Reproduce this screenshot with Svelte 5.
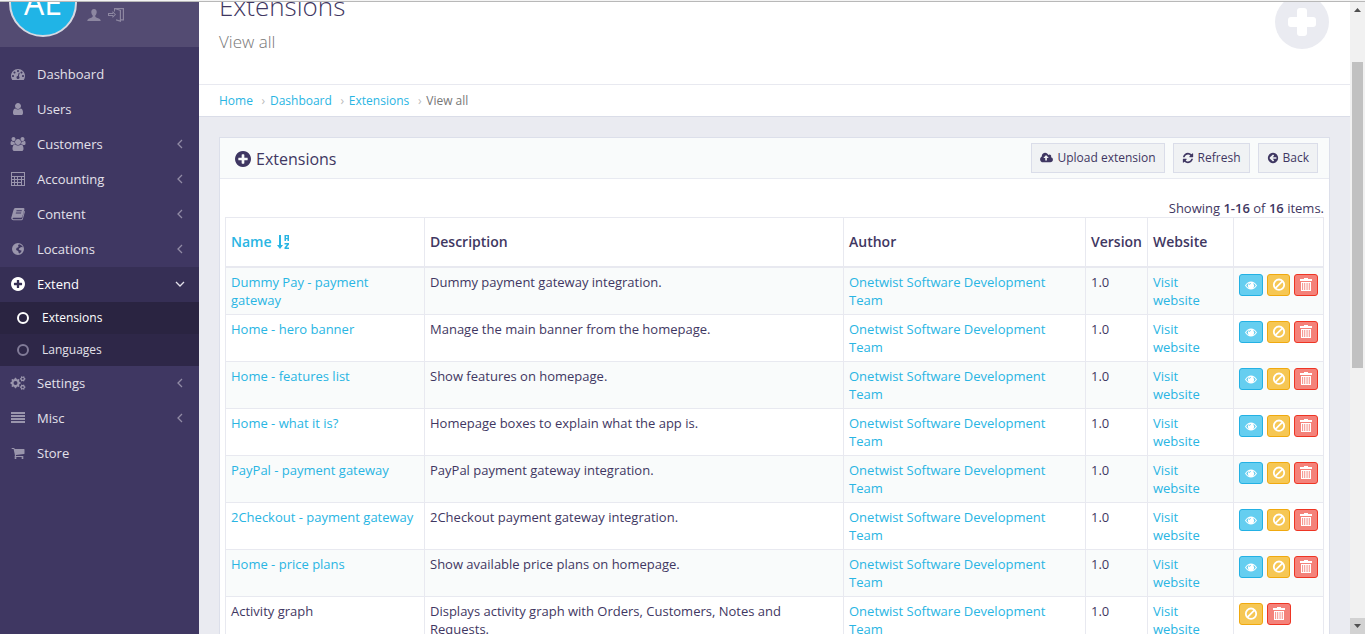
<script>
  const menu = [
    { label: 'Dashboard', icon: 'gauge' },
    { label: 'Users', icon: 'user' },
    { label: 'Customers', icon: 'users', more: true },
    { label: 'Accounting', icon: 'calc', more: true },
    { label: 'Content', icon: 'book', more: true },
    { label: 'Locations', icon: 'globe', more: true },
    { label: 'Extend', icon: 'plus', more: true, open: true, children: ['Extensions', 'Languages'] },
    { label: 'Settings', icon: 'cogs', more: true },
    { label: 'Misc', icon: 'lines', more: true },
    { label: 'Store', icon: 'cart' }
  ];
  const rows = [
    ['Dummy Pay - payment gateway', 'Dummy payment gateway integration.'],
    ['Home - hero banner', 'Manage the main banner from the homepage.'],
    ['Home - features list', 'Show features on homepage.'],
    ['Home - what it is?', 'Homepage boxes to explain what the app is.'],
    ['PayPal - payment gateway', 'PayPal payment gateway integration.'],
    ['2Checkout - payment gateway', '2Checkout payment gateway integration.'],
    ['Home - price plans', 'Show available price plans on homepage.'],
    ['Activity graph', 'Displays activity graph with Orders, Customers, Notes and Requests.', true]
  ];
  const paths = {
    gauge: ['0 0 1792 1792', 'M384 1152q0-53-37.5-90.5t-90.5-37.5-90.5 37.5-37.5 90.5 37.5 90.5 90.5 37.5 90.5-37.5 37.5-90.5zm192-448q0-53-37.5-90.5t-90.5-37.5-90.5 37.5-37.5 90.5 37.5 90.5 90.5 37.5 90.5-37.5 37.5-90.5zm428 481l101-382q6-26-7.5-48.5t-38.5-29.5-48 6.5-30 39.5l-101 382q-60 5-107 43.5t-63 98.5q-20 77 20 146t117 89 146-20 89-117q16-60-6-117t-72-91zm660-33q0-53-37.5-90.5t-90.5-37.5-90.5 37.5-37.5 90.5 37.5 90.5 90.5 37.5 90.5-37.5 37.5-90.5zm-640-640q0-53-37.5-90.5t-90.5-37.5-90.5 37.5-37.5 90.5 37.5 90.5 90.5 37.5 90.5-37.5 37.5-90.5zm448 192q0-53-37.5-90.5t-90.5-37.5-90.5 37.5-37.5 90.5 37.5 90.5 90.5 37.5 90.5-37.5 37.5-90.5zm320 448q0 261-141 483-19 29-54 29h-1402q-35 0-54-29-141-221-141-483 0-182 71-348t191-286 286-191 348-71 348 71 286 191 191 286 71 348z'],
    user: ['0 0 1792 1792', 'M1536 1399q0 109-62.5 187t-150.5 78h-854q-88 0-150.5-78t-62.5-187q0-85 8.5-160.5t31.5-152 58.5-131 94-89 134.5-34.5q131 128 313 128t313-128q76 0 134.5 34.5t94 89 58.5 131 31.5 152 8.5 160.5zm-256-887q0 159-112.5 271.5t-271.5 112.5-271.5-112.5-112.5-271.5 112.5-271.5 271.5-112.5 271.5 112.5 112.5 271.5z'],
    users: ['64 0 1920 1792', 'M657 896q-162 5-265 128h-134q-82 0-138-40.5t-56-118.5q0-353 124-353 6 0 43.5 21t97.5 42.5 119 21.5q67 0 133-23-5 37-5 66 0 159 93 293zm1071 637q0 120-73 189.5t-194 69.5h-874q-121 0-194-69.5t-73-189.5q0-53 3.5-103.5t14-109 26.5-108.5 43-97.5 62-81 85.5-53.5 111.5-20q10 0 43 21.5t73 48 107 48 135 21.5 135-21.5 107-48 73-48 43-21.5q61 0 111.5 20t85.5 53.5 62 81 43 97.5 26.5 108.5 14 109 3.5 103.5zm-1024-1277q0 106-75 181t-181 75-181-75-75-181 75-181 181-75 181 75 75 181zm704 384q0 159-112.5 271.5t-271.5 112.5-271.5-112.5-112.5-271.5 112.5-271.5 271.5-112.5 271.5 112.5 112.5 271.5zm576 225q0 78-56 118.5t-138 40.5h-134q-103-123-265-128 93-134 93-293 0-29-5-66 66 23 133 23 59 0 119-21.5t97.5-42.5 43.5-21q124 0 124 353zm-128-609q0 106-75 181t-181 75-181-75-75-181 75-181 181-75 181 75 75 181z'],
    calc: ['0 0 14 14', 'M0 0h14v14h-14zM1 1v3h12v-3zM1 5v2h2v-2zM4 5v2h2v-2zM7 5v2h3v-2zM11 5v2h2v-2zM1 8v2h2v-2zM4 8v2h2v-2zM7 8v2h3v-2zM11 8v5h2v-5zM1 11v2h2v-2zM4 11v2h2v-2zM7 11v2h3v-2z'],
    book: ['0 0 14 14', 'M4.4 1h8q1.300.1 1 1.400l-2.100 7.400q-.3 1-1.300 1H2.400q-.8 0-.8.700t.9.700h7.800q.7 0 .9-.7l2-7.700q.9.400.6 1.500l-1.900 6.700q-.4 1.200-1.600 1.200H2.300Q.7 13.200.3 11.800q-.2-.8.1-1.500l2-7q.5-2.200 2-2.300zM5.600 3.300l-.3 1h5.300l.3-1zM5 5.500l-.3 1H10l.3-1z'],
    globe: ['0 0 14 14', 'M7 1a6 6 0 1 0 0 12A6 6 0 1 0 7 1zM8 2.300l2 .6 1.900 2.100-.7.3-1.200-.4-.8.900-1.200.6-.2 1.200 1.200.6 1.500.4-.3 1.500-1.800 1.300-.7-.3-.3-1.500L6.800 8.800l-1-.4-.8-1.100.8-1.500 1.500-.6.200-1.300-.6-.5z'],
    plus: ['128 128 1536 1536', 'M1344 960v-128q0-26-19-45t-45-19h-256v-256q0-26-19-45t-45-19h-128q-26 0-45 19t-19 45v256h-256q-26 0-45 19t-19 45v128q0 26 19 45t45 19h256v256q0 26 19 45t45 19h128q26 0 45-19t19-45v-256h256q26 0 45-19t19-45zm320-64q0 209-103 385.500t-279.500 279.500-385.500 103-385.500-103-279.500-279.500-103-385.500 103-385.500 279.500-279.500 385.500-103 385.500 103 279.500 279.500 103 385.500z'],
    lines: ['0 0 14 14', 'M0 1h14v2H0zM0 4h14v2H0zM0 7h14v2H0zM0 10h14v2H0z'],
    cart: ['0 0 1792 1792', 'M704 1536q0 52-38 90t-90 38-90-38-38-90 38-90 90-38 90 38 38 90zm896 0q0 52-38 90t-90 38-90-38-38-90 38-90 90-38 90 38 38 90zm128-1088v512q0 24-16.500 42.500t-40.500 21.500l-1044 122q13 60 13 70 0 16-24 64h920q26 0 45 19t19 45-19 45-45 19h-1024q-26 0-45-19t-19-45q0-11 8-31.500t16-36 21.500-40 15.500-29.500l-177-823h-204q-26 0-45-19t-19-45 19-45 45-19h256q16 0 28.500 6.500t19.500 15.500 13 24.500 8 26 5.500 29.500 4.500 26h1201q26 0 45 19t19 45z'],
    cloud: ['-64 0 1920 1792', 'M1216 864q0-14-9-23l-352-352q-9-9-23-9t-23 9l-351 351q-10 12-10 24 0 14 9 23t23 9h224v352q0 13 9.500 22.500t22.500 9.500h192q13 0 22.500-9.500t9.500-22.500v-352h224q13 0 22.500-9.500t9.500-22.500zm640 288q0 159-112.500 271.500t-271.500 112.500h-1088q-185 0-316.500-131.500t-131.500-316.500q0-130 70-240t188-165q-2-30-2-43 0-212 150-362t362-150q156 0 285.500 87t188.500 231q71-62 166-62 106 0 181 75t75 181q0 76-41 138 130 31 213.500 135.500t83.500 238.500z'],
    refresh: ['0 0 1792 1792', 'M1639 1056q0 5-1 7-64 268-268 434.500t-478 166.500q-146 0-282.500-55t-243.500-157l-129 129q-19 19-45 19t-45-19-19-45v-448q0-26 19-45t45-19h448q26 0 45 19t19 45-19 45l-137 137q71 66 161 102t187 36q134 0 250-65t186-179q11-17 53-117 8-23 30-23h192q13 0 22.500 9.500t9.500 22.500zm25-800v448q0 26-19 45t-45 19h-448q-26 0-45-19t-19-45 19-45l138-138q-148-137-349-137-134 0-250 65t-186 179q-11 17-53 117-8 23-30 23h-199q-13 0-22.500-9.500t-9.500-22.500v-7q65-268 270-434.500t480-166.500q146 0 284 55.500t245 156.500l130-129q19-19 45-19t45 19 19 45z'],
    back: ['0 0 1792 1792', 'M1408 960v-128q0-26-19-45t-45-19h-502l189-189q19-19 19-45t-19-45l-91-91q-18-18-45-18t-45 18l-362 362-91 91q-18 18-18 45t18 45l91 91 362 362q18 18 45 18t45-18l91-91q18-18 18-45t-18-45l-189-189h502q26 0 45-19t19-45zm256-64q0 209-103 385.500t-279.500 279.500-385.500 103-385.500-103-279.500-279.500-103-385.500 103-385.500 279.500-279.500 385.500-103 385.500 103 279.500 279.500 103 385.500z'],
    person: ['0 0 14 14', 'M7 1C8.900 1 9.800 2.400 9.700 4.200 9.600 5.800 8.900 7 8.300 7.600c-.3.900.1 1.400.9 1.800l3.100 1.300c1 .5 1.300 1.100 1.400 2.300H.3c.1-1.200.4-1.800 1.400-2.300l3.100-1.300c.8-.4 1.200-.9.9-1.800C5.100 7 4.400 5.800 4.300 4.200 4.200 2.400 5.100 1 7 1z'],
    login: ['0 0 16 14', 'M6 0h10v12.500h-3V14l-5-1.500V11.300l3.800 1V2.700L8 1.500 7 1.200v2.300H6zM10 1l3 1v9.300h1.800V1.200zM4.500 3L8 6.500 4.500 10V8H0V5h4.500zM5.300 5v1H1v1h4.300v1l1.500-1.500z']
  };
  const cog = (cx, cy, r, n) => {
    let d = '';
    for (let i = 0; i < n * 4; i++) {
      const a = ((i - 0.5) / (n * 4)) * Math.PI * 2;
      const q = i % 4 < 2 ? r : r * 0.78;
      d += (i ? 'L' : 'M') + (cx + q * Math.cos(a)).toFixed(2) + ' ' + (cy + q * Math.sin(a)).toFixed(2);
    }
    const h = r * 0.38;
    return d + `zM${cx - h} ${cy}a${h} ${h} 0 1 0 ${2 * h} 0a${h} ${h} 0 1 0 ${-2 * h} 0z`;
  };
  paths.cogs = ['0 0 15 14', cog(5, 7, 5.2, 8) + cog(12.2, 2.8, 2.8, 6) + cog(12.2, 11.2, 2.8, 6)];
</script>

{#snippet icon(name, cls = '')}
  <svg class="ico {cls}" viewBox={paths[name][0]} aria-hidden="true"><path fill-rule="evenodd" d={paths[name][1]} /></svg>
{/snippet}

<div class="page">
  <div class="edge"></div>
  <div class="shell">
    <aside>
      <div class="profile">
        <div class="avatar">AE</div>
        <a href="#account" aria-label="Account">{@render icon('person')}</a>
        <a href="#logout" aria-label="Log out">{@render icon('login', 'exit')}</a>
      </div>
      <nav>
        {#each menu as m}
          <a class="item" class:open={m.open} href="#menu">
            {@render icon(m.icon, m.icon === 'users' || m.icon === 'cogs' ? 'broad' : '')}
            <span>{m.label}</span>
            {#if m.more}
              <svg class="chev" viewBox="0 0 10 10" aria-hidden="true"><path d={m.open ? 'M1 3l4 4 4-4' : 'M7 1L3 5l4 4'} /></svg>
            {/if}
          </a>
          {#if m.children}
            <div class="sub">
              {#each m.children as c, i}
                <a href="#sub" class:current={i === 0}>
                  <svg viewBox="0 0 12 12" aria-hidden="true"><circle cx="6" cy="6" r="5" /></svg><span>{c}</span>
                </a>
              {/each}
            </div>
          {/if}
        {/each}
      </nav>
    </aside>

    <main>
      <header>
        <div>
          <h1>Extensions</h1>
          <p>View all</p>
        </div>
        <a class="add" href="#add" aria-label="Add"><svg viewBox="0 0 54 54"><circle cx="27" cy="27" r="27" /><path d="M25 13h4q3 0 3 3v6h6q3 0 3 3v4q0 3-3 3h-6v6q0 3-3 3h-4q-3 0-3-3v-6h-6q-3 0-3-3v-4q0-3 3-3h6v-6q0-3 3-3z" /></svg></a>
      </header>
      <div class="crumbs">
        <a href="#home">Home</a><i>›</i><a href="#dash">Dashboard</a><i>›</i><a href="#ext">Extensions</a><i>›</i><span>View all</span>
      </div>

      <section>
        <div class="head">
          <h2>{@render icon('plus')}Extensions</h2>
          <div class="tools">
            <button>{@render icon('cloud', 'wide')}Upload extension</button>
            <button>{@render icon('refresh')}Refresh</button>
            <button>{@render icon('back')}Back</button>
          </div>
        </div>
        <div class="body">
          <div class="summary">Showing <b>1-16</b> of <b>16</b> items.</div>
          <table>
            <colgroup><col class="c1" /><col /><col class="c3" /><col class="c4" /><col class="c5" /><col class="c6" /></colgroup>
            <thead>
              <tr>
                <th><a class="sorted" href="#sort">Name<svg class="sort" viewBox="0 0 14 14" aria-hidden="true"><path d="M2 0h2v10h2l-3 4-3-4h2z" /><path fill-rule="evenodd" d="M7.500 0H12v6h-1.500V4.200H9V6H7.500zM9 1.200V3h1.500V1.200zM7.500 8H12v1.500L9.500 12.600H12V14H7.500v-1.400L10 9.400H7.500z" /></svg></a></th>
                <th>Description</th><th>Author</th><th>Version</th><th>Website</th><th></th>
              </tr>
            </thead>
            <tbody>
              {#each rows as [name, text, plain]}
                <tr>
                  <td>{#if plain}{name}{:else}<a href="#item">{name}</a>{/if}</td>
                  <td>{text}</td>
                  <td><a href="#author">Onetwist Software Development Team</a></td>
                  <td>1.0</td>
                  <td><a href="#site">Visit website</a></td>
                  <td>
                    <div class="acts">
                      {#if !plain}
                        <button class="view" aria-label="View"><svg viewBox="0 0 14 14"><path fill-rule="evenodd" d="M1 7.500Q3.500 3.500 7 3.500t6 4Q10.500 11.500 7 11.500t-6-4zM2.200 7.500Q3 9.200 4.800 10 3 7.500 4.800 5 3 5.800 2.200 7.500zM11.800 7.500Q11 5.800 9.200 5 11 7.500 9.200 10 11 9.200 11.800 7.500zM6.800 5Q5.300 5 5.100 6.700l.8.2Q6 5.800 7 5.700z" /></svg></button>
                      {/if}
                      <button class="stop" aria-label="Disable"><svg viewBox="0 0 14 14"><path class="line" d="M7 1.500a5.200 5.200 0 1 0 0 10.400A5.200 5.200 0 1 0 7 1.500zM3.500 10.200l7-7" /></svg></button>
                      <button class="del" aria-label="Delete"><svg viewBox="0 0 14 14"><path fill-rule="evenodd" d="M5 0h4v1h4v2H1V1h4zM2 4h10v9H2zM3.200 5v7h.9V5zM5.300 5v7h.9V5zM7.600 5v7h.9V5zM9.800 5v7h.9V5z" /></svg></button>
                    </div>
                  </td>
                </tr>
              {/each}
            </tbody>
          </table>
        </div>
      </section>
    </main>

    <div class="bar" aria-hidden="true">
      <svg viewBox="0 0 15 16"><path d="M4 10l3.500-4L11 10z" /></svg>
      <div class="track"><div class="thumb"></div></div>
      <svg class="down" viewBox="0 0 15 16"><path d="M4 6h7l-3.500 4z" /></svg>
    </div>
  </div>
</div>

<style>
  .page { height: 100vh; overflow: hidden; display: flex; flex-direction: column; font: 13px/18px "Open Sans", sans-serif; color: #3f3762; background: #eaebf1; }
  .page * { box-sizing: border-box; }
  .edge { flex: none; height: 2px; background: #f4f4f4; border-bottom: 1px solid #b8b8b8; }
  .shell { flex: 1; min-height: 0; display: grid; grid-template-columns: 199px 1fr 15px; }
  a { color: #29b5e3; text-decoration: none; }
  .ico { width: 14px; height: 14px; flex: none; fill: currentColor; }

  aside { background: #3f3762; min-height: 0; }
  .profile { height: 45px; background: #534b72; padding-left: 9px; display: flex; align-items: flex-end; overflow: hidden; }
  .profile a { color: #8d87a1; margin-bottom: 25px; height: 14px; display: flex; }
  .profile .exit { width: 16px; margin-left: 7px; }
  .avatar { flex: none; width: 68px; height: 68px; margin: 0 10px 10px 0; border: 2px solid #d6d8e2; border-radius: 50%; background: #20b4e6; color: #fff; font-size: 32px; line-height: 64px; text-align: center; }
  nav { padding-top: 10px; }
  .item { height: 35px; padding: 0 14px 2px 11px; display: flex; align-items: center; gap: 12px; color: #e3e1ea; }
  .item span { flex: 1; }
  .item .ico { color: #9a95ac; }
  .item .broad { width: 16px; margin: 0 -1px; }
  .chev { width: 10px; height: 10px; fill: none; stroke: #918ba5; stroke-width: 1.3; }
  .item.open { background: #362f55; color: #fff; }
  .item.open .ico { color: #fff; }
  .open .chev { stroke: #e3e1ea; }
  .sub { background: #2a2441; }
  .sub a { height: 32px; padding: 0 0 0 17px; display: flex; align-items: center; gap: 13px; font-size: 12px; color: #e3e1ea; }
  .sub a + a { background: #2e2748; }
  .sub svg { width: 12px; height: 12px; fill: none; stroke: #817b98; stroke-width: 2; }
  .sub .current { color: #fff; }
  .sub .current svg { stroke: #fff; }

  main { min-width: 0; min-height: 0; overflow: hidden; }
  header { height: 83px; background: #fff; border-bottom: 1px solid #e8e9f0; padding: 0 21px 0 20px; display: flex; justify-content: space-between; align-items: flex-end; overflow: hidden; }
  h1 { margin: 0 0 7px; font-size: 26px; line-height: 36px; font-weight: 300; }
  header p { margin: 0 0 31px; font-size: 17px; line-height: 22px; font-weight: 300; color: #777; }
  .add { height: 54px; margin-bottom: 35px; }
  .add svg { width: 54px; height: 54px; fill: #eaebf1; }
  .add path { fill: #fff; }
  .crumbs { height: 32px; background: #fff; border-bottom: 1px solid #dadde8; padding: 0 20px; display: flex; align-items: center; font-size: 12px; }
  .crumbs i { width: 17px; padding-left: 4px; text-align: center; font-style: normal; color: #bbb; }
  .crumbs span { color: #777; }

  section { margin: 20px 20px 0; border: 1px solid #dcdfea; background: #fff; }
  .head { height: 41px; padding: 0 11px 0 15px; background: #f9fbfb; border-bottom: 1px solid #e8eaf1; display: flex; justify-content: space-between; align-items: center; }
  h2 { margin: 0; display: flex; align-items: center; gap: 5px; font-size: 16px; line-height: 24px; font-weight: 400; padding-top: 1px; }
  h2 .ico { width: 16px; height: 16px; }
  .tools { display: flex; gap: 8px; }
  .tools button { height: 30px; padding: 0 8px; display: flex; align-items: center; gap: 4px; border: 1px solid #dadde9; background: #f0f2f4; color: #3f3762; font: 12px/18px "Open Sans", sans-serif; }
  .tools .ico { width: 12px; height: 12px; }
  .tools .wide { width: 13px; height: 12px; }
  .body { padding: 20px 5px 0; }
  .summary { text-align: right; }
  b { font-weight: 600; }
  table { width: 100%; table-layout: fixed; border-collapse: collapse; }
  .c1 { width: 199px; } .c3 { width: 242px; } .c4 { width: 62px; } .c5 { width: 86px; } .c6 { width: 90px; }
  th, td { border: 1px solid #e8e9f0; padding: 5px; text-align: left; vertical-align: top; }
  th { height: 49px; vertical-align: middle; border-bottom-width: 2px; font-size: 14px; font-weight: 600; }
  .sorted { display: flex; align-items: center; gap: 5px; }
  .sort { width: 14px; height: 14px; fill: currentColor; }
  tbody tr:nth-child(odd) { background: #f9fbfb; }
  .acts { display: flex; gap: 4px; padding-top: 1px; }
  .acts button { width: 24px; height: 22px; padding: 0; display: flex; align-items: center; justify-content: center; border-width: 1px; border-style: solid; border-radius: 3px; }
  .acts svg { width: 14px; height: 14px; fill: #fff; }
  .acts .line { fill: none; stroke: #fff; stroke-width: 1.8; }
  .acts .view { background: #65cef0; border-color: #23b1e4; }
  .acts .stop { background: #f6c754; border-color: #f0a90f; }
  .acts .del { background: #f4827a; border-color: #ee3524; }

  .bar { background: #f1f1f1; display: flex; flex-direction: column; min-height: 0; }
  .bar svg { flex: none; width: 15px; height: 16px; fill: #505050; }
  .bar .down { background: #d2d2d2; }
  .track { flex: 1; padding: 44px 2px 0; }
  .thumb { height: 55%; background: #c1c1c1; }
</style>
